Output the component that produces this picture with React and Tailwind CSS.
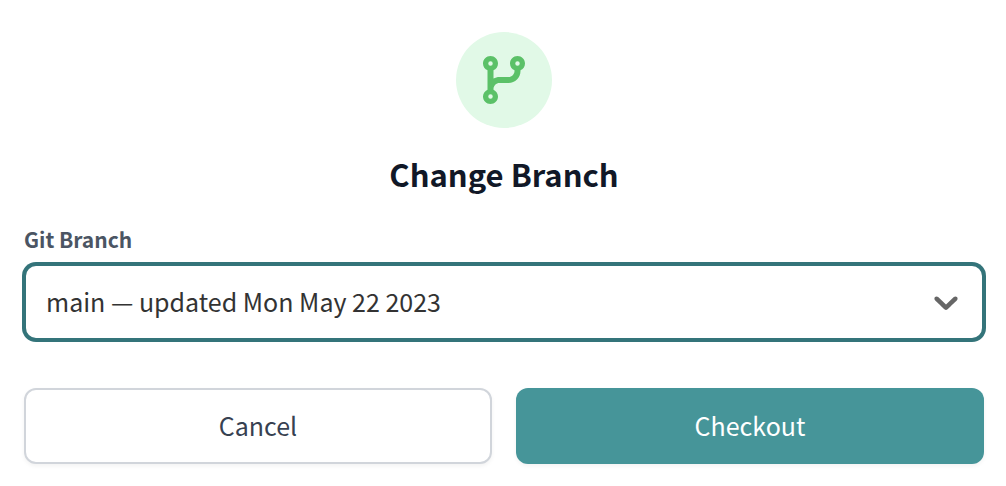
import { useState } from "react";
import { FaCodeBranch } from "react-icons/fa6";

function ChevronDown({ className }) {
  return (
    <svg viewBox="0 0 20 20" fill="currentColor" aria-hidden="true" className={className}>
      <path d="M4.516 7.548c0.436-0.446 1.043-0.481 1.576 0l3.908 3.747 3.908-3.747c0.533-0.481 1.141-0.446 1.574 0 0.436 0.445 0.408 1.197 0 1.615-0.406 0.418-4.695 4.502-4.695 4.502-0.217 0.223-0.502 0.335-0.787 0.335s-0.57-0.112-0.789-0.335c0 0-4.287-4.084-4.695-4.502s-0.436-1.17 0-1.615z" />
    </svg>
  );
}

export default function App() {
  const [branch, setBranch] = useState("main");

  return (
    <main className="min-h-screen bg-white pt-8 pr-[22px] pb-6 pl-6 font-['Noto_Sans_CJK_SC','Noto_Sans',sans-serif]">
      <form onSubmit={(event) => event.preventDefault()}>
        <div className="mx-auto flex size-24 items-center justify-center rounded-full bg-[#e1f9e7] text-[#5bc168]">
          <FaCodeBranch className="h-12 w-[42px]" aria-hidden="true" />
        </div>
        <h1 className="mt-6 text-center text-[31px] leading-11 font-bold text-[#111827]">
          Change Branch
        </h1>
        <label
          htmlFor="branch"
          className="mt-6 block text-[21px] leading-[38px] font-bold text-[#4b5563]"
        >
          Git Branch
        </label>
        <div className="relative mt-1.5">
          <select
            id="branch"
            value={branch}
            onChange={(event) => setBranch(event.target.value)}
            className="block h-[76px] w-full appearance-none rounded-xl border-2 border-[#34747a] bg-white pr-16 pl-5 text-[25px] text-[#333333] ring-2 ring-[#34747a] outline-none"
          >
            <option value="main">main — updated Mon May 22 2023</option>
          </select>
          <ChevronDown className="pointer-events-none absolute inset-y-0 right-[18px] my-auto size-10 text-[#666666]" />
        </div>
        <div className="mt-12 grid grid-cols-2 gap-6">
          <button
            type="button"
            className="h-[76px] rounded-xl border-2 border-[#d1d5db] bg-white text-[25px] text-[#374151] shadow-[0_2px_4px_rgba(0,0,0,0.05)]"
          >
            Cancel
          </button>
          <button
            type="submit"
            className="h-[76px] rounded-xl bg-[#469599] text-[25px] text-white shadow-[0_2px_4px_rgba(0,0,0,0.05)]"
          >
            Checkout
          </button>
        </div>
      </form>
    </main>
  );
}
